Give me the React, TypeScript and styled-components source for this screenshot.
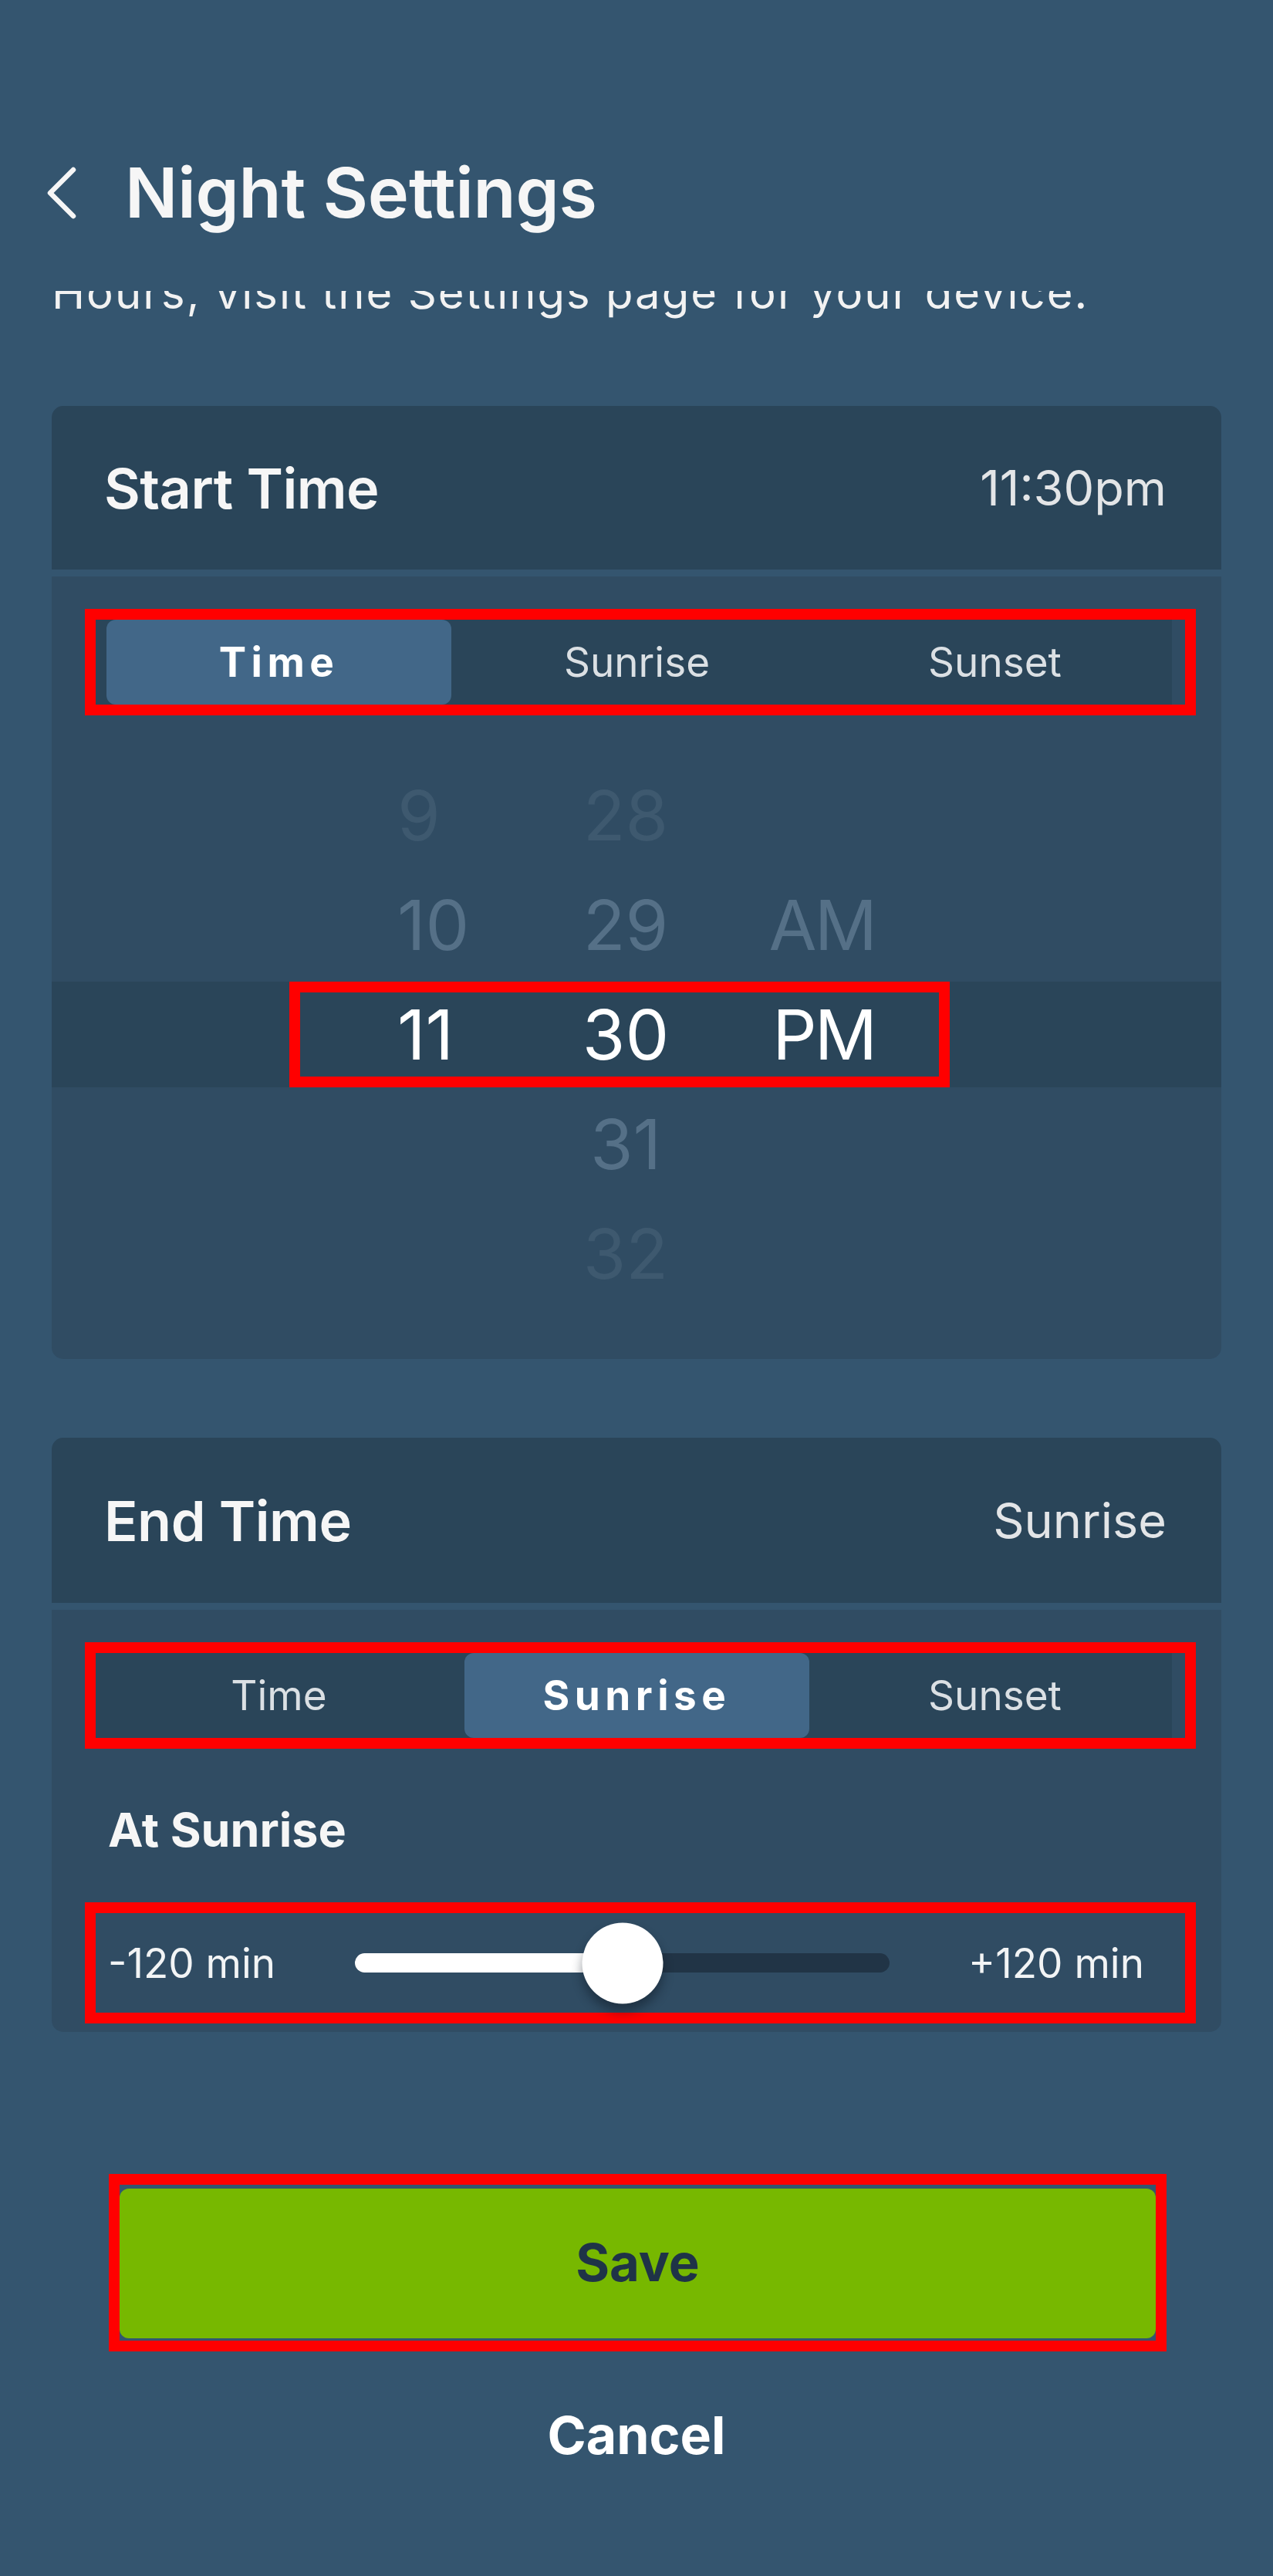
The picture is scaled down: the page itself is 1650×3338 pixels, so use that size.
import React from "react";
import styled, { createGlobalStyle } from "styled-components";

const GlobalStyle = createGlobalStyle`
  html, body {
    margin: 0;
    padding: 0;
    background: #34556f;
  }
  body {
    font-family: Inter, "Noto Sans", "Liberation Sans", sans-serif;
    color: #f5f5f5;
    -webkit-font-smoothing: antialiased;
  }
  * { box-sizing: border-box; }
`;

const Page = styled.div`
  width: 1650px;
  min-height: 3338px;
  background: #34556f;
  display: flex;
  flex-direction: column;
`;

const Header = styled.header`
  height: 377px;
  display: flex;
  align-items: flex-start;
  padding: 195px 0 0 60px;
  gap: 62px;
`;

const BackButton = styled.button`
  all: unset;
  height: 110px;
  display: flex;
  align-items: center;
  cursor: pointer;
  padding-bottom: 6px;
`;

const Title = styled.h1`
  margin: 0;
  font-size: 90px;
  line-height: 110px;
  font-weight: 600;
  color: #f6f6f6;
  letter-spacing: -0.2px;
`;

const DescriptionClip = styled.div`
  height: 36px;
  overflow: hidden;
  display: flex;
  align-items: flex-end;
  padding-left: 67px;
`;

const Description = styled.p`
  margin: 0;
  font-size: 58px;
  line-height: 68px;
  letter-spacing: 2px;
  color: #f2f2f2;
  white-space: nowrap;
`;

const Content = styled.main`
  padding: 113px 67px 0;
  display: flex;
  flex-direction: column;
  gap: 102px;
`;

const Card = styled.section`
  display: flex;
  flex-direction: column;
  gap: 9px;
`;

const CardHeader = styled.div<{ $h: number }>`
  height: ${(p) => p.$h}px;
  background: #2a4559;
  border-radius: 15px 15px 0 0;
  display: flex;
  align-items: center;
  justify-content: space-between;
  padding: 0 71px 0 68px;
`;

const CardTitle = styled.h2`
  margin: 0;
  font-size: 72px;
  font-weight: 600;
  color: #f6f6f6;
  letter-spacing: -0.5px;
`;

const CardValue = styled.span`
  font-size: 63px;
  font-weight: 400;
  color: #e3e5e7;
`;

const CardBody = styled.div<{ $pb: number }>`
  background: #304c63;
  border-radius: 0 0 15px 15px;
  padding: 42px 0 ${(p) => p.$pb}px;
  display: flex;
  flex-direction: column;
`;

const HighlightFrame = styled.div`
  margin: 0 33px 0 43px;
  border: 14px solid #ff0000;
`;

const Segmented = styled.div`
  height: 110px;
  margin-right: 17px;
  background: #2a4559;
  padding-left: 14px;
  display: grid;
  grid-template-columns: repeat(3, 447px);
  column-gap: 17px;
`;

const Segment = styled.button<{ $active: boolean }>`
  all: unset;
  display: flex;
  align-items: center;
  justify-content: center;
  border-radius: 12px;
  background: ${(p) => (p.$active ? "#426788" : "transparent")};
  font-family: Inter, "Noto Sans", sans-serif;
  font-size: 53px;
  font-weight: ${(p) => (p.$active ? 700 : 400)};
  letter-spacing: ${(p) => (p.$active ? "6.5px" : "0")};
  color: ${(p) => (p.$active ? "#ffffff" : "#dbe0e4")};
  cursor: pointer;
`;

const Picker = styled.div`
  margin-top: 61px;
  display: flex;
  flex-direction: column;
  gap: 5px;
`;

const PickerRow = styled.div<{ $selected: boolean }>`
  height: 137px;
  background: ${(p) => (p.$selected ? "#2a4559" : "transparent")};
`;

const PickerCells = styled.div<{ $framed: boolean }>`
  margin-left: 308px;
  width: 856px;
  height: 137px;
  border: 14px solid ${(p) => (p.$framed ? "#ff0000" : "transparent")};
  padding-left: 126px;
  display: grid;
  grid-template-columns: 180px 232px 207px;
  align-items: center;
`;

const PickerCell = styled.span<{ $dist: number; $align: "left" | "center" | "right" }>`
  font-size: 90px;
  line-height: 109px;
  font-weight: 400;
  text-align: ${(p) => p.$align};
  letter-spacing: ${(p) => (p.$align === "right" ? "-3px" : "0")};
  color: ${(p) => (p.$dist === 0 ? "#ffffff" : p.$dist === 1 ? "#557087" : "#3e596f")};
`;

const SubTitle = styled.h3`
  margin: 65px 0 54px 73px;
  font-size: 61px;
  line-height: 80px;
  font-weight: 700;
  color: #f6f6f6;
`;

const SliderRow = styled.div`
  height: 129px;
  padding-left: 16px;
  padding-right: 53px;
  display: grid;
  grid-template-columns: 320px 693px 1fr;
  align-items: center;
`;

const SliderLabel = styled.span<{ $right?: boolean }>`
  font-size: 53px;
  color: #f2f4f5;
  text-align: ${(p) => (p.$right ? "right" : "left")};
`;

const Track = styled.div`
  position: relative;
  height: 25px;
  border-radius: 13px;
  background: #213446;
`;

const TrackFill = styled.div`
  height: 100%;
  border-radius: 13px;
  background: #ffffff;
`;

const Thumb = styled.div`
  position: absolute;
  top: 50%;
  width: 105px;
  height: 105px;
  border-radius: 50%;
  background: #ffffff;
  transform: translate(-50%, -50%);
  box-shadow: 0 10px 14px rgba(10, 20, 30, 0.45);
`;

const Footer = styled.footer`
  margin-top: 184px;
  display: flex;
  flex-direction: column;
  align-items: stretch;
`;

const SaveFrame = styled.div`
  margin: 0 138px 0 141px;
  border: 14px solid #ff0000;
  padding: 5px 0 3px;
`;

const SaveButton = styled.button`
  all: unset;
  display: flex;
  align-items: center;
  justify-content: center;
  width: 100%;
  height: 194px;
  border-radius: 12px;
  background: #77b800;
  font-family: Inter, "Noto Sans", sans-serif;
  font-size: 67px;
  font-weight: 700;
  color: #1f3347;
  cursor: pointer;
  box-sizing: border-box;
  padding-bottom: 4px;
`;

const CancelButton = styled.button`
  all: unset;
  margin-top: 68px;
  align-self: center;
  font-family: Inter, "Noto Sans", sans-serif;
  font-size: 68px;
  line-height: 80px;
  font-weight: 700;
  color: #ffffff;
  cursor: pointer;
`;

const Chevron = () => (
  <svg width="40" height="68" viewBox="0 0 40 68" fill="none">
    <polyline
      points="35,4 5,34 35,64"
      stroke="#f6f6f6"
      strokeWidth="6.5"
      strokeLinecap="round"
      strokeLinejoin="round"
    />
  </svg>
);

const SEGMENTS = ["Time", "Sunrise", "Sunset"];

const SegmentControl = ({ active }: { active: string }) => (
  <HighlightFrame>
    <Segmented>
      {SEGMENTS.map((s) => (
        <Segment key={s} $active={s === active}>
          {s}
        </Segment>
      ))}
    </Segmented>
  </HighlightFrame>
);

const rows: { h: string; m: string; ap: string }[] = [
  { h: "9", m: "28", ap: "" },
  { h: "10", m: "29", ap: "AM" },
  { h: "11", m: "30", ap: "PM" },
  { h: "", m: "31", ap: "" },
  { h: "", m: "32", ap: "" },
];

const TimePicker = () => (
  <Picker>
    {rows.map((r, i) => {
      const dist = Math.abs(i - 2);
      return (
        <PickerRow key={i} $selected={dist === 0}>
          <PickerCells $framed={dist === 0}>
            <PickerCell $dist={dist} $align="left">{r.h}</PickerCell>
            <PickerCell $dist={dist} $align="center">{r.m}</PickerCell>
            <PickerCell $dist={dist} $align="right">{r.ap}</PickerCell>
          </PickerCells>
        </PickerRow>
      );
    })}
  </Picker>
);

const OffsetSlider = ({ value, min, max }: { value: number; min: number; max: number }) => {
  const pct = ((value - min) / (max - min)) * 100;
  return (
    <HighlightFrame>
      <SliderRow>
        <SliderLabel>{min} min</SliderLabel>
        <Track>
          <TrackFill style={{ width: `${pct}%` }} />
          <Thumb style={{ left: `${pct}%` }} />
        </Track>
        <SliderLabel $right>+{max} min</SliderLabel>
      </SliderRow>
    </HighlightFrame>
  );
};

export default function App() {
  return (
    <>
      <GlobalStyle />
      <Page>
        <Header>
          <BackButton aria-label="Back">
            <Chevron />
          </BackButton>
          <Title>Night Settings</Title>
        </Header>
        <DescriptionClip>
          <Description>Hours, visit the Settings page for your device.</Description>
        </DescriptionClip>
        <Content>
          <Card>
            <CardHeader $h={212}>
              <CardTitle>Start Time</CardTitle>
              <CardValue>11:30pm</CardValue>
            </CardHeader>
            <CardBody $pb={68}>
              <SegmentControl active="Time" />
              <TimePicker />
            </CardBody>
          </Card>
          <Card>
            <CardHeader $h={214}>
              <CardTitle>End Time</CardTitle>
              <CardValue>Sunrise</CardValue>
            </CardHeader>
            <CardBody $pb={11}>
              <SegmentControl active="Sunrise" />
              <SubTitle>At Sunrise</SubTitle>
              <OffsetSlider value={0} min={-120} max={120} />
            </CardBody>
          </Card>
        </Content>
        <Footer>
          <SaveFrame>
            <SaveButton>Save</SaveButton>
          </SaveFrame>
          <CancelButton>Cancel</CancelButton>
        </Footer>
      </Page>
    </>
  );
}
